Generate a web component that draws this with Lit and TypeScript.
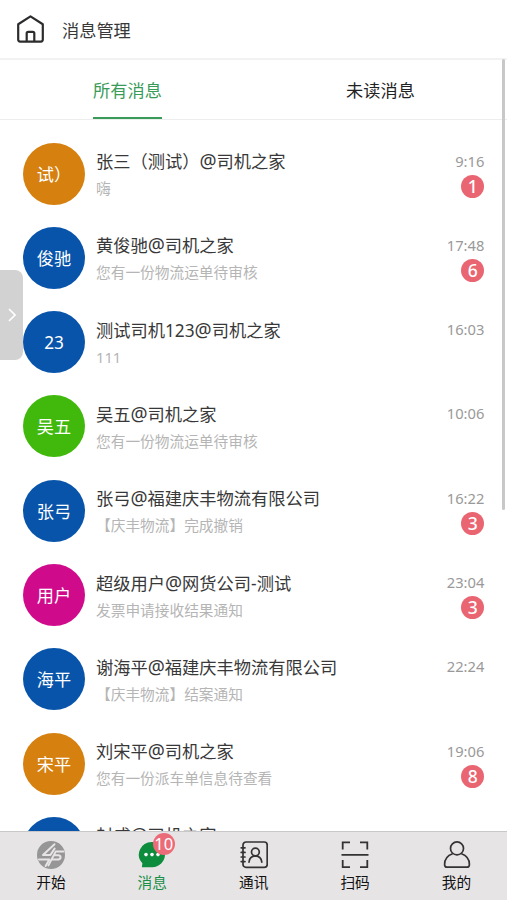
import { LitElement, html, css, svg, nothing } from "lit";
import { customElement, property } from "lit/decorators.js";
import { classMap } from "lit/directives/class-map.js";

interface Message {
  avatar: string;
  tone: "amber" | "blue" | "green" | "pink";
  title: string;
  text: string;
  time: string;
  unread?: number;
}

const messages: Message[] = [
  { avatar: "试）", tone: "amber", title: "张三（测试）@司机之家", text: "嗨", time: "9:16", unread: 1 },
  { avatar: "俊驰", tone: "blue", title: "黄俊驰@司机之家", text: "您有一份物流运单待审核", time: "17:48", unread: 6 },
  { avatar: "23", tone: "blue", title: "测试司机123@司机之家", text: "111", time: "16:03" },
  { avatar: "吴五", tone: "green", title: "吴五@司机之家", text: "您有一份物流运单待审核", time: "10:06" },
  { avatar: "张弓", tone: "blue", title: "张弓@福建庆丰物流有限公司", text: "【庆丰物流】完成撤销", time: "16:22", unread: 3 },
  { avatar: "用户", tone: "pink", title: "超级用户@网货公司-测试", text: "发票申请接收结果通知", time: "23:04", unread: 3 },
  { avatar: "海平", tone: "blue", title: "谢海平@福建庆丰物流有限公司", text: "【庆丰物流】结案通知", time: "22:24" },
  { avatar: "宋平", tone: "amber", title: "刘宋平@司机之家", text: "您有一份派车单信息待查看", time: "19:06", unread: 8 },
  { avatar: "封成", tone: "blue", title: "封成@司机之家", text: "", time: "18:44" },
];

const icons = {
  start: svg`<circle cx="14" cy="14" r="14" fill="#969696"/>
    <g fill="none" stroke="#e7e4e5" stroke-width="2" stroke-linejoin="round" stroke-linecap="round">
      <path d="M17.5 3.2L6 14H13.4L17.6 7.6M2 18.4H12.4L8.6 25"/>
      <path d="M26.4 10.4H18.8L11.4 24.4M15 18.6H20Q23.6 18.6 23.6 16.2Q23.6 14.2 21 14.2H17"/>
    </g>`,
  message: svg`<path d="M14 1A13 12.6 0 1 1 14 26.2H4.6Q3.6 26.2 4 25.2L4.4 22.2A13 12.6 0 0 1 14 1Z" fill="#0c8c3c"/>
    <g fill="#fff"><circle cx="8" cy="13.6" r="1.8"/><circle cx="14" cy="13.6" r="1.8"/><circle cx="20" cy="13.6" r="1.8"/></g>`,
  contacts: svg`<g fill="none" stroke="#333" stroke-width="1.7" stroke-linecap="round">
      <rect x="3" y="1" width="24.2" height="25.4" rx="3"/>
      <path d="M1.2 6.8H5M1.2 11.4H5M1.2 16H5M1.2 20.6H5"/>
      <circle cx="15.4" cy="11" r="3.9"/><path d="M9 21.2Q9.5 15.1 15.4 14.9Q21.2 15.1 21.8 21.2"/>
    </g>`,
  scan: svg`<path d="M1.7 8.6V1.4H9M19 1.4H26.3V8.6M1.7 19V26.2H9M19 26.2H26.3V19M.5 13.8H27.5" fill="none" stroke="#333" stroke-width="1.8"/>`,
  mine: svg`<g fill="none" stroke="#333" stroke-width="1.7">
      <circle cx="14" cy="7.4" r="6.5"/><path d="M9.6 12.8Q1.6 15.6 1.6 23.4Q1.6 26.2 4.2 26.2H23.8Q26.4 26.2 26.4 23.4Q26.4 15.6 18.4 12.8"/>
    </g>`,
};

@customElement("message-row")
export class MessageRow extends LitElement {
  @property({ attribute: false }) item!: Message;

  static styles = css`
    :host { display: flex; align-items: center; height: 84.3px; padding: 0 22.7px 0 23px; box-sizing: border-box; }
    .avatar { flex: none; width: 62px; height: 62px; border-radius: 50%; display: flex; align-items: center; justify-content: center; color: #fff; font-size: 17.2px; line-height: 24px; white-space: nowrap; box-sizing: border-box; padding-top: 2px; }
    .amber { background: #d5800f; }
    .blue { background: #0854aa; }
    .green { background: #40b90c; }
    .pink { background: #d00b8b; }
    .body { flex: 1; min-width: 0; margin-left: 11px; height: 49px; display: flex; flex-direction: column; gap: 2px; white-space: nowrap; }
    .title { font-size: 17.25px; line-height: 26px; color: #383838; }
    .at { font-size: 19px; line-height: 0; }
    .text { font-size: 14.7px; line-height: 22px; color: #b5b5b5; }
    .meta { height: 52px; display: flex; flex-direction: column; align-items: flex-end; gap: 1px; }
    .time { font-size: 14.7px; line-height: 26px; color: #999; }
    .count { width: 23px; height: 23px; border-radius: 50%; background: #e96571; color: #fff; font-size: 17.5px; font-weight: 500; line-height: 23px; text-align: center; }
  `;

  render() {
    const m = this.item;
    const [name, company] = m.title.split("@");
    return html`
      <div class=${classMap({ avatar: true, [m.tone]: true })}>${m.avatar}</div>
      <div class="body"><div class="title">${name}<span class="at">@</span>${company}</div><div class="text">${m.text}</div></div>
      <div class="meta"><div class="time">${m.time}</div>${m.unread ? html`<div class="count">${m.unread}</div>` : nothing}</div>
    `;
  }
}

@customElement("nav-item")
export class NavItem extends LitElement {
  @property() label = "";
  @property({ attribute: false }) icon: unknown;
  @property({ type: Number }) badge = 0;
  @property({ type: Boolean }) active = false;

  static styles = css`
    :host { flex: 1; display: flex; flex-direction: column; align-items: center; padding: 8.5px 0 0 0.4px; }
    .icon { position: relative; width: 28px; height: 28px; }
    .icon svg { display: block; width: 28px; height: 28px; }
    .badge { position: absolute; left: 14.5px; top: -8px; width: 22px; height: 22px; border-radius: 50%; background: #ec6b79; color: #fff; font-size: 16.5px; line-height: 22px; display: flex; justify-content: center; }
    .label { font-size: 14.7px; line-height: 22px; margin-top: 2px; color: #111; }
    .active { color: #189048; }
  `;

  render() {
    return html`
      <div class="icon"><svg viewBox="0 0 28 28">${this.icon}</svg>${this.badge ? html`<span class="badge">${this.badge}</span>` : nothing}</div>
      <div class=${classMap({ label: true, active: this.active })}>${this.label}</div>
    `;
  }
}

@customElement("app-root")
export class AppRoot extends LitElement {
  static styles = css`
    :host { position: relative; display: flex; flex-direction: column; height: 900px; overflow: hidden; background: #fff; font-family: "Noto Sans", "Noto Sans CJK SC", sans-serif; }
    .header { flex: none; height: 60px; box-sizing: border-box; border-bottom: 2px solid #f2f2f2; display: flex; align-items: center; padding: 0 17px; gap: 18px; color: #383838; font-size: 17.2px; }
    .home { width: 27px; height: 28px; }
    .tabs { flex: none; height: 60px; box-sizing: border-box; border-bottom: 1px solid #ededed; display: flex; padding-left: 1px; }
    .cell { flex: 1; display: flex; justify-content: center; }
    .tab { box-sizing: border-box; height: 59px; border-bottom: 2px solid transparent; font-size: 17.2px; line-height: 61px; color: #222; }
    .current { color: #389b58; border-bottom-color: #389b58; }
    .list { flex: 1; min-height: 0; overflow: hidden; padding-top: 11.4px; }
    .nav { flex: none; height: 69px; box-sizing: border-box; background: #e7e4e5; border-top: 1px solid #c9c7c8; display: flex; }
    .handle { position: absolute; left: 0; top: 270px; width: 23px; height: 90px; border-radius: 0 8px 8px 0; background: #d2d2d2; display: flex; align-items: center; justify-content: center; }
    .handle svg { width: 8px; height: 14px; margin-left: 1px; }
    .thumb { position: absolute; right: 2px; top: 59px; width: 3.5px; height: 451px; border-radius: 2px; background: #c8c8c8; }
  `;

  render() {
    return html`
      <div class="header">
        <svg class="home" viewBox="0 0 27 28" fill="none" stroke="#2c2c2e" stroke-width="2.2" stroke-linejoin="round">
          <path d="M1.2 9.3L13.5 1.4L25.8 9.3V24.6Q25.8 26.6 23.8 26.6H3.2Q1.2 26.6 1.2 24.6Z"/>
          <path d="M9.7 26.6V18.3Q9.7 16.8 11.2 16.8H15.8Q17.3 16.8 17.3 18.3V26.6"/>
        </svg>
        <span>消息管理</span>
      </div>
      <div class="tabs">
        <div class="cell"><div class="tab current">所有消息</div></div>
        <div class="cell"><div class="tab">未读消息</div></div>
      </div>
      <div class="list">${messages.map((m) => html`<message-row .item=${m}></message-row>`)}</div>
      <div class="nav">
        <nav-item label="开始" .icon=${icons.start}></nav-item>
        <nav-item label="消息" .icon=${icons.message} .badge=${10} active></nav-item>
        <nav-item label="通讯" .icon=${icons.contacts}></nav-item>
        <nav-item label="扫码" .icon=${icons.scan}></nav-item>
        <nav-item label="我的" .icon=${icons.mine}></nav-item>
      </div>
      <div class="handle"><svg viewBox="0 0 8 14" fill="none" stroke="#fff" stroke-width="1.6"><path d="M1 1L7 7L1 13"/></svg></div>
      <div class="thumb"></div>
    `;
  }
}
